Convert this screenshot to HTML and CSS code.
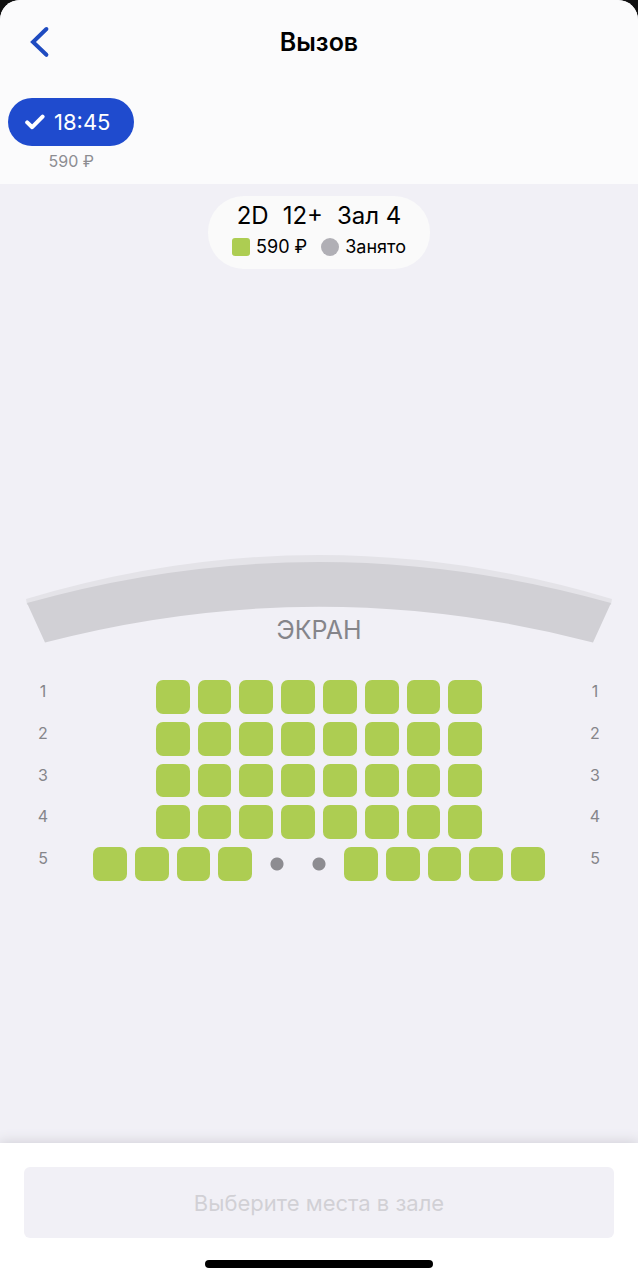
FILE: index.html
```html
<!DOCTYPE html>
<html lang="ru">
<head>
<meta charset="utf-8">
<meta name="viewport" content="width=device-width, initial-scale=1">
<title>Вызов</title>
<link rel="stylesheet" href="styles.css">
</head>
<body>
<div class="sheet">
  <header class="header">
    <div class="navbar">
      <button class="back" type="button" aria-label="Назад">
        <svg width="20" height="32" viewBox="0 0 20 32" fill="none" stroke="currentColor" stroke-width="4" stroke-linecap="round" stroke-linejoin="miter"><path d="M16.400 3 3 16l13.400 12.800"/></svg>
      </button>
      <h1 class="title">Вызов</h1>
    </div>
    <div class="session">
      <button class="time" type="button" aria-pressed="true">
        <svg width="20" height="16" viewBox="0 0 20 16" fill="none" stroke="currentColor" stroke-width="4" stroke-linecap="round" stroke-linejoin="round"><path d="M2.2 8.4 7.2 13.2 17.6 2.6"/></svg>
        <span>18:45</span>
      </button>
      <span class="price">590 ₽</span>
    </div>
  </header>

  <main class="hall">
    <section class="info">
      <div class="facts"><span>2D</span><span>12+</span><span>Зал 4</span></div>
      <div class="legend">
        <span class="legend-item"><i class="mark mark-free"></i>590 ₽</span>
        <span class="legend-item"><i class="mark mark-taken"></i>Занято</span>
      </div>
    </section>

    <svg class="screen" viewBox="0 0 586 100">
      <path class="screen-edge" d="M0 44Q293-44 586 44L585 50 1 50Z"/>
      <path class="screen-face" d="M1 48Q293-34 585 48L567 87.500Q293 16 19 87.500Z"/>
      <text class="screen-label" x="293" y="84" text-anchor="middle">ЭКРАН</text>
    </svg>

    <div class="rows">
      <div class="row"><span class="num">1</span><div class="seats"><button class="seat" aria-label="Ряд 1, место 1"></button><button class="seat" aria-label="Ряд 1, место 2"></button><button class="seat" aria-label="Ряд 1, место 3"></button><button class="seat" aria-label="Ряд 1, место 4"></button><button class="seat" aria-label="Ряд 1, место 5"></button><button class="seat" aria-label="Ряд 1, место 6"></button><button class="seat" aria-label="Ряд 1, место 7"></button><button class="seat" aria-label="Ряд 1, место 8"></button></div><span class="num">1</span></div>
      <div class="row"><span class="num">2</span><div class="seats"><button class="seat" aria-label="Ряд 2, место 1"></button><button class="seat" aria-label="Ряд 2, место 2"></button><button class="seat" aria-label="Ряд 2, место 3"></button><button class="seat" aria-label="Ряд 2, место 4"></button><button class="seat" aria-label="Ряд 2, место 5"></button><button class="seat" aria-label="Ряд 2, место 6"></button><button class="seat" aria-label="Ряд 2, место 7"></button><button class="seat" aria-label="Ряд 2, место 8"></button></div><span class="num">2</span></div>
      <div class="row"><span class="num">3</span><div class="seats"><button class="seat" aria-label="Ряд 3, место 1"></button><button class="seat" aria-label="Ряд 3, место 2"></button><button class="seat" aria-label="Ряд 3, место 3"></button><button class="seat" aria-label="Ряд 3, место 4"></button><button class="seat" aria-label="Ряд 3, место 5"></button><button class="seat" aria-label="Ряд 3, место 6"></button><button class="seat" aria-label="Ряд 3, место 7"></button><button class="seat" aria-label="Ряд 3, место 8"></button></div><span class="num">3</span></div>
      <div class="row"><span class="num">4</span><div class="seats"><button class="seat" aria-label="Ряд 4, место 1"></button><button class="seat" aria-label="Ряд 4, место 2"></button><button class="seat" aria-label="Ряд 4, место 3"></button><button class="seat" aria-label="Ряд 4, место 4"></button><button class="seat" aria-label="Ряд 4, место 5"></button><button class="seat" aria-label="Ряд 4, место 6"></button><button class="seat" aria-label="Ряд 4, место 7"></button><button class="seat" aria-label="Ряд 4, место 8"></button></div><span class="num">4</span></div>
      <div class="row"><span class="num">5</span><div class="seats"><button class="seat" aria-label="Ряд 5, место 1"></button><button class="seat" aria-label="Ряд 5, место 2"></button><button class="seat" aria-label="Ряд 5, место 3"></button><button class="seat" aria-label="Ряд 5, место 4"></button><button class="seat taken" disabled aria-label="Ряд 5, место 5, занято"></button><button class="seat taken" disabled aria-label="Ряд 5, место 6, занято"></button><button class="seat" aria-label="Ряд 5, место 7"></button><button class="seat" aria-label="Ряд 5, место 8"></button><button class="seat" aria-label="Ряд 5, место 9"></button><button class="seat" aria-label="Ряд 5, место 10"></button><button class="seat" aria-label="Ряд 5, место 11"></button></div><span class="num">5</span></div>
    </div>
  </main>

  <footer class="footer">
    <button class="submit" type="button" disabled>Выберите места в зале</button>
    <div class="home"></div>
  </footer>
</div>
</body>
</html>
```

FILE: styles.css
```css
* {
  box-sizing: border-box;
}

body {
  margin: 0;
  background: #111;
  font-family: Inter, "Liberation Sans", sans-serif;
  color: #000;
}

button {
  margin: 0;
  padding: 0;
  border: 0;
  background: none;
  font: inherit;
  color: inherit;
}

svg {
  display: block;
}

.sheet {
  display: flex;
  flex-direction: column;
  min-height: 100vh;
  overflow: hidden;
  border-radius: 20px 20px 0 0;
  background: #f1f0f6;
}

.header {
  padding-bottom: 12px;
  background: #fbfbfc;
}

.navbar {
  display: grid;
  grid-template-columns: 48px 1fr 48px;
  align-items: center;
  height: 84px;
  padding: 0 16px;
}

.back {
  display: grid;
  place-items: center;
  height: 48px;
  color: #1f4bc0;
}

.title {
  margin: 0;
  font-size: 25px;
  font-weight: 600;
  line-height: 32px;
  text-align: center;
}

.session {
  display: inline-flex;
  flex-direction: column;
  align-items: center;
  gap: 4px;
  padding: 14px 8px 0;
}

.time {
  display: flex;
  align-items: center;
  gap: 9px;
  height: 48px;
  padding: 0 24px 0 17px;
  border-radius: 24px;
  background: #1f4bce;
  color: #fff;
  font-size: 22px;
}

.price {
  color: #8d8d92;
  font-size: 16px;
  line-height: 22px;
}

.hall {
  display: flex;
  flex: 1;
  flex-direction: column;
  align-items: center;
  padding: 12px 0 48px;
}

.info {
  display: flex;
  flex-direction: column;
  align-items: center;
  gap: 4px;
  height: 73px;
  padding: 4px 24px;
  border-radius: 36px;
  background: #fafafa;
}

.facts {
  display: flex;
  gap: 14px;
  font-size: 24px;
  line-height: 32px;
}

.legend {
  display: flex;
  gap: 14px;
  font-size: 18px;
  line-height: 22px;
}

.legend-item {
  display: flex;
  align-items: center;
  gap: 6px;
}

.mark {
  width: 18px;
  height: 18px;
}

.mark-free {
  border-radius: 3px;
  background: #adcd52;
}

.mark-taken {
  border-radius: 50%;
  background: #b0afb5;
}

.screen {
  width: calc(100% - 52px);
  margin-top: 286px;
}

.screen-edge {
  fill: #e4e3e8;
}

.screen-face {
  fill: #d1d0d5;
}

.screen-label {
  fill: #85858a;
  font-size: 25px;
}

.rows {
  display: flex;
  flex-direction: column;
  gap: 8px;
  width: 100%;
  margin-top: 25px;
  padding: 0 32px;
}

.row {
  display: grid;
  grid-template-columns: 22px 1fr 22px;
  gap: 39px;
  align-items: start;
}

.num {
  color: #85858a;
  font-size: 16px;
  line-height: 22px;
  text-align: center;
}

.seats {
  display: flex;
  justify-content: center;
  gap: 8px;
}

.seat {
  width: calc((100% - 80px) / 11);
  aspect-ratio: 1;
  border-radius: 7px;
  background: #adcd52;
}

.taken {
  background: radial-gradient(circle, #8d8c91 6px, transparent 7px);
}

.footer {
  display: flex;
  flex-direction: column;
  gap: 22px;
  padding: 24px 24px 12px;
  background: #fff;
  box-shadow: 0 0 12px 1px #d0cfd6;
}

.submit {
  height: 71px;
  border-radius: 6px;
  background: #f1f0f6;
  color: #d1d0d5;
  font-size: 22px;
}

.home {
  align-self: center;
  width: 228px;
  height: 8px;
  border-radius: 4px;
  background: #000;
}
```
